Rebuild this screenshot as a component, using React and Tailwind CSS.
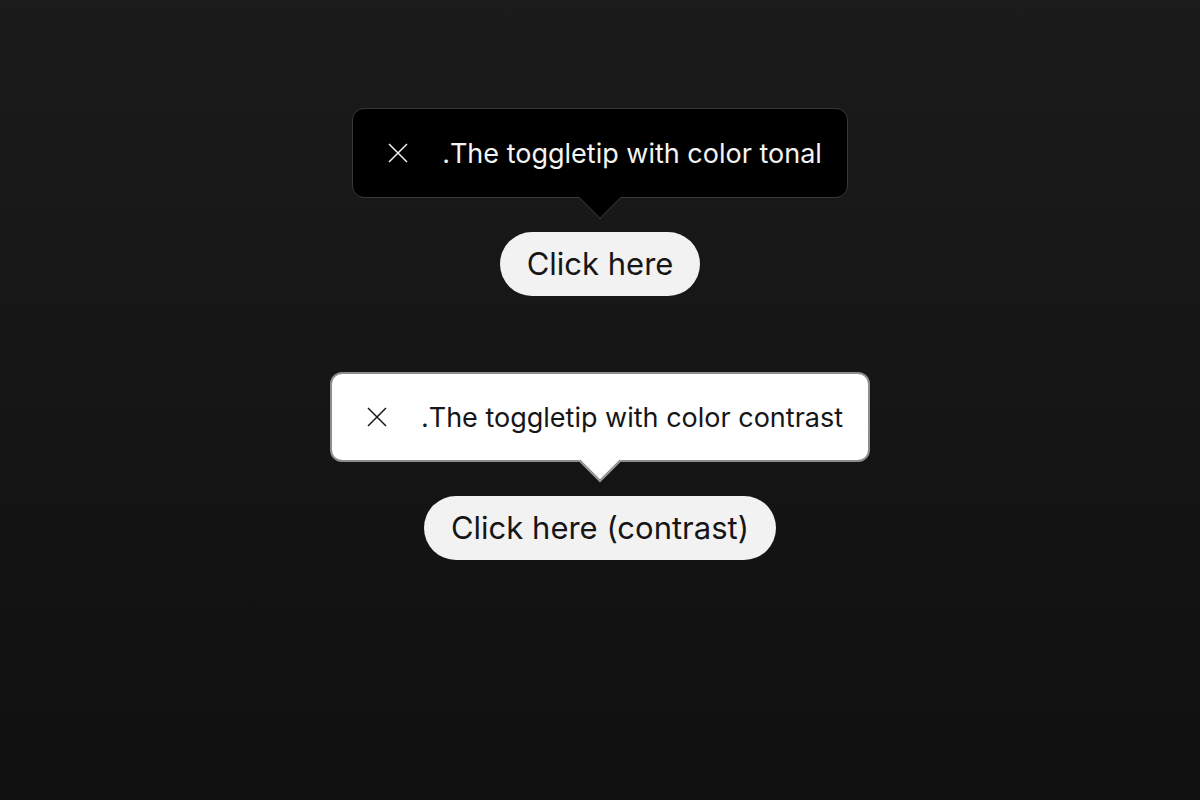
import React from 'react';

const CloseIcon = ({ className }) => (
  <svg viewBox="0 0 20 20" className={className} fill="none" stroke="currentColor" strokeWidth="1.5">
    <path d="M1 1 L19 19 M19 1 L1 19" />
  </svg>
);

const Toggletip = ({ text, label, contrast }) => (
  <div className="flex flex-col items-center">
    <div
      dir="rtl"
      className={`relative flex h-[90px] items-center gap-6 rounded-xl px-[25px] ${contrast ? 'bg-white text-[#161616] border-2 border-[#8d8d8d]' : 'bg-black text-[#f4f4f4] border border-[#393939]'}`}
    >
      <span className="text-[27px] leading-none">{text}</span>
      <button className="flex h-10 w-10 items-center justify-center">
        <CloseIcon className="h-5 w-5" />
      </button>
      <div
        className={`absolute left-1/2 -bottom-[16px] h-[30px] w-[30px] -translate-x-1/2 rotate-45 ${contrast ? 'bg-white border-r-2 border-b-2 border-[#8d8d8d]' : 'bg-black border-r border-b border-[#393939]'}`}
      />
    </div>
    <button className="mt-[34px] h-16 rounded-full bg-[#f2f2f2] px-[27px] text-[31px] text-[#161616]">
      {label}
    </button>
  </div>
);

export default function App() {
  return (
    <div
      className="flex h-[800px] w-full flex-col items-center bg-gradient-to-b from-[#1b1b1b] to-[#101010] pt-[108px]"
      style={{ fontFamily: 'Inter, "Noto Sans", sans-serif' }}
    >
      <Toggletip text="The toggletip with color tonal." label="Click here" />
      <div className="mt-[76px]">
        <Toggletip text="The toggletip with color contrast." label="Click here (contrast)" contrast />
      </div>
    </div>
  );
}
